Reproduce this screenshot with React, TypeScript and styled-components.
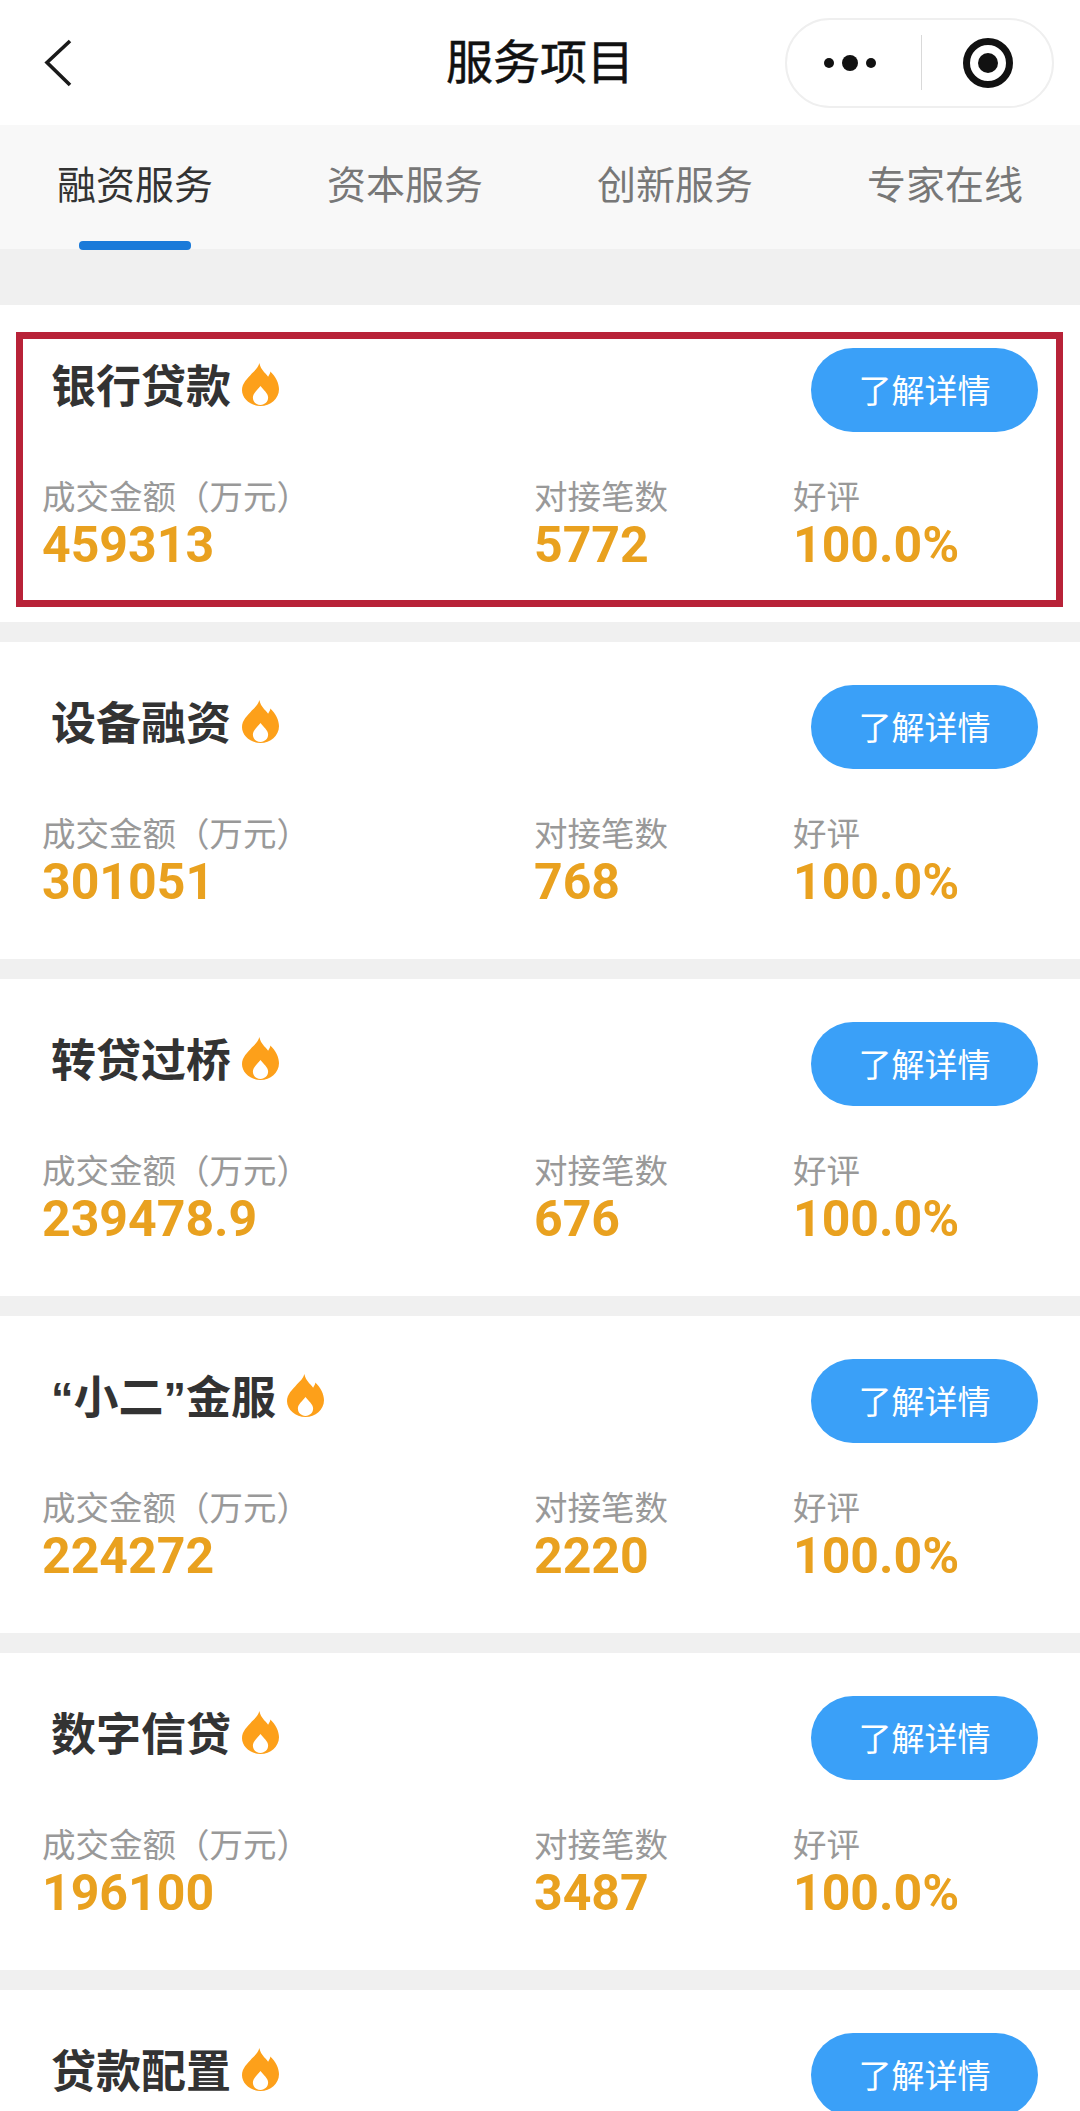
import React from "react";
import styled, { createGlobalStyle } from "styled-components";

const CJK = `"Liberation Sans", "Noto Sans CJK SC", sans-serif`;

const Global = createGlobalStyle`
  html, body { margin: 0; padding: 0; background: #f0f0f0; }
  * { box-sizing: border-box; }
`;

const Page = styled.div`
  width: 1080px;
  height: 2111px;
  overflow: hidden;
  background: #f0f0f0;
  font-family: ${CJK};
`;

const NavBar = styled.header`
  height: 125px;
  background: #fff;
  display: grid;
  grid-template-columns: 1fr auto 1fr;
  align-items: center;
`;

const BackButton = styled.div`
  padding-left: 44px;
  display: flex;
  align-items: center;
`;

const NavTitle = styled.h1`
  margin: 0;
  font-size: 47px;
  font-weight: 400;
  line-height: 60px;
  color: #111;
  -webkit-text-stroke: 0.5px #111;
`;

const CapsuleSlot = styled.div`
  display: flex;
  justify-content: flex-end;
  padding-right: 26px;
`;

const Capsule = styled.div`
  width: 269px;
  height: 90px;
  border: 2px solid #efefef;
  border-radius: 45px;
  display: grid;
  grid-template-columns: 134px 1px 1fr;
  align-items: center;
  justify-items: center;
  background: #fff;
`;

const MoreDots = styled.svg`
  margin-right: 8px;
`;

const Target = styled.svg`
  margin-left: 2px;
`;

const CapsuleDivider = styled.span`
  width: 1px;
  height: 55px;
  background: #d9d9d9;
`;

const TabBar = styled.nav`
  height: 124px;
  background: #f8f8f8;
  display: flex;
  padding-left: 57px;
  gap: 115px;
`;

const Tab = styled.div<{ $active?: boolean }>`
  position: relative;
  width: 155px;
  font-size: 39px;
  line-height: 50px;
  padding-top: 36px;
  white-space: nowrap;
  color: ${(p) => (p.$active ? "#333" : "#777")};

  ${(p) =>
    p.$active &&
    `&::after {
      content: "";
      position: absolute;
      left: 22px;
      bottom: -1px;
      width: 112px;
      height: 9px;
      border-radius: 4px;
      background: #1a7ad9;
    }`}
`;

const List = styled.main`
  padding-top: 56px;
  display: flex;
  flex-direction: column;
  gap: 20px;
`;

const Card = styled.section`
  position: relative;
  height: 317px;
  flex: none;
  background: #fff;
`;

const Highlight = styled.div`
  position: absolute;
  left: 16px;
  right: 17px;
  top: 27px;
  height: 275px;
  border: 7px solid #b82238;
  pointer-events: none;
`;

const CardHeader = styled.div`
  height: 84px;
  padding: 0 42px 0 51px;
  display: flex;
  align-items: center;
  justify-content: space-between;
  position: relative;
  top: 43px;
`;

const TitleRow = styled.div`
  display: flex;
  align-items: center;
  gap: 11px;
  height: 84px;
  padding-bottom: 4px;
`;

const CardTitle = styled.h2`
  margin: 0;
  font-size: 45px;
  line-height: 56px;
  font-weight: 700;
  color: #333;
`;

const FlameIcon = styled.svg`
  margin-bottom: 7px;
`;

const DetailButton = styled.button`
  width: 227px;
  height: 84px;
  border: 0;
  border-radius: 42px;
  padding: 3px 0 0;
  background: #3aa0f8;
  color: #fff;
  font-family: inherit;
  font-size: 33px;
  line-height: 81px;
`;

const Stats = styled.div`
  display: grid;
  grid-template-columns: 492px 259px 1fr;
  padding: 89px 0 0 42px;
`;

const Stat = styled.div`
  display: flex;
  flex-direction: column;
`;

const StatLabel = styled.span`
  font-size: 33.5px;
  line-height: 40px;
  color: #999;
  white-space: nowrap;
`;

const StatValue = styled.span`
  font-family: Roboto, "Liberation Sans", sans-serif;
  font-size: 50px;
  line-height: 54px;
  font-weight: 700;
  color: #e9a11f;
`;

const Flame = () => (
  <FlameIcon width="37" height="43" viewBox="0 0 34 41" preserveAspectRatio="none" aria-hidden="true">
    <path
      fill="#fda01a"
      fillRule="evenodd"
      d="M16 0C17 6 21 9 24 13C25 11 26 10 26 8C31 13 34 19 34 25C34 34 26 41 17 41C8 41 0 34 0 26C0 19 5 15 9 10C12 7 15 4 16 0ZM17 22C14 26 10 29 10 33C10 37 13 40 17 40C21 40 24 37 24 33C24 29 20 26 17 22Z"
    />
  </FlameIcon>
);

const services = [
  { title: "银行贷款", amount: "459313", count: "5772", highlight: true },
  { title: "设备融资", amount: "301051", count: "768" },
  { title: "转贷过桥", amount: "239478.9", count: "676" },
  { title: "“小二”金服", amount: "224272", count: "2220" },
  { title: "数字信贷", amount: "196100", count: "3487" },
  { title: "贷款配置", amount: "", count: "" },
];

const tabs = ["融资服务", "资本服务", "创新服务", "专家在线"];

export default function App() {
  return (
    <Page>
      <Global />
      <NavBar>
        <BackButton>
          <svg width="28" height="48" viewBox="0 0 28 48" fill="none" aria-hidden="true">
            <path d="M26 2 3 23.5 26 46" stroke="#1a1a1a" strokeWidth="3.6" />
          </svg>
        </BackButton>
        <NavTitle>服务项目</NavTitle>
        <CapsuleSlot>
          <Capsule>
            <MoreDots width="54" height="20" viewBox="0 0 54 20" aria-hidden="true">
              <circle cx="6" cy="10" r="5" fill="#111" />
              <circle cx="27" cy="10" r="8" fill="#111" />
              <circle cx="48" cy="10" r="5" fill="#111" />
            </MoreDots>
            <CapsuleDivider />
            <Target width="50" height="50" viewBox="0 0 50 50" aria-hidden="true">
              <circle cx="25" cy="25" r="21.5" fill="none" stroke="#111" strokeWidth="7" />
              <circle cx="25" cy="25" r="10" fill="#111" />
            </Target>
          </Capsule>
        </CapsuleSlot>
      </NavBar>
      <TabBar>
        {tabs.map((t, i) => (
          <Tab key={t} $active={i === 0}>
            {t}
          </Tab>
        ))}
      </TabBar>
      <List>
        {services.map((s) => (
          <Card key={s.title}>
            <CardHeader>
              <TitleRow>
                <CardTitle>{s.title}</CardTitle>
                <Flame />
              </TitleRow>
              <DetailButton>了解详情</DetailButton>
            </CardHeader>
            {s.amount && (
              <Stats>
                <Stat>
                  <StatLabel>成交金额（万元）</StatLabel>
                  <StatValue>{s.amount}</StatValue>
                </Stat>
                <Stat>
                  <StatLabel>对接笔数</StatLabel>
                  <StatValue>{s.count}</StatValue>
                </Stat>
                <Stat>
                  <StatLabel>好评</StatLabel>
                  <StatValue>100.0%</StatValue>
                </Stat>
              </Stats>
            )}
            {s.highlight && <Highlight />}
          </Card>
        ))}
      </List>
    </Page>
  );
}
